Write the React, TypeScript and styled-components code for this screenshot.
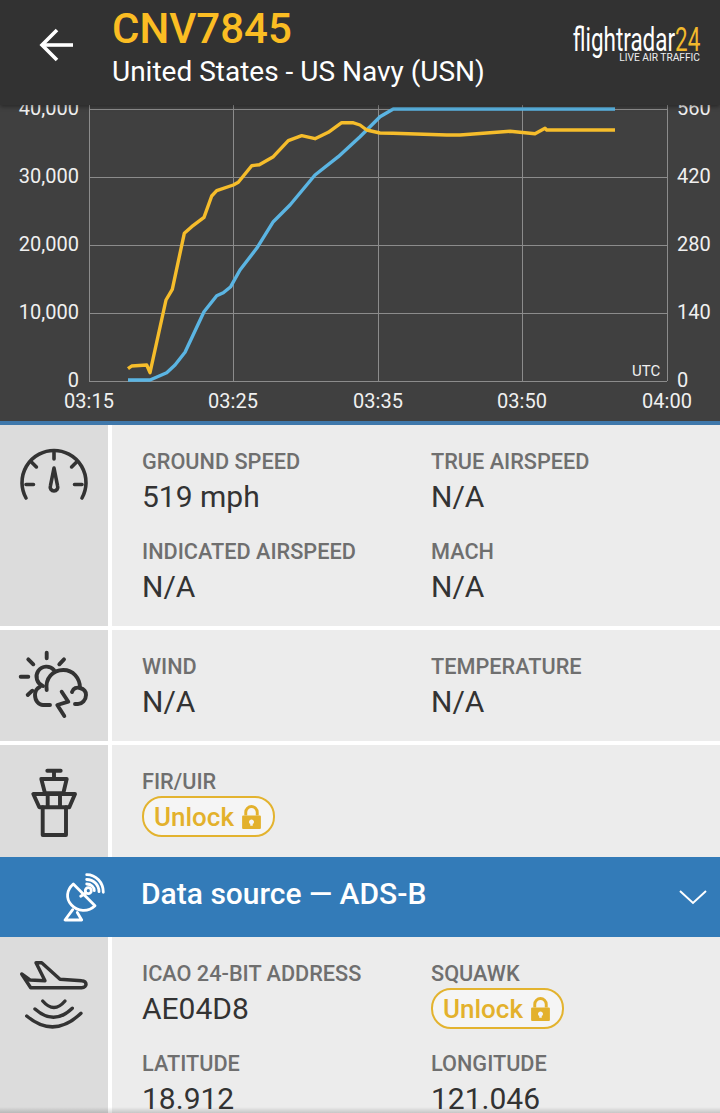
import styled, { createGlobalStyle } from 'styled-components';
import type { ReactNode } from 'react';

const GlobalStyle = createGlobalStyle`
  html, body {
    margin: 0;
    padding: 0;
    background: #fff;
  }
  body {
    font-family: Roboto, 'Liberation Sans', sans-serif;
  }
`;

const ScPage = styled.div`
  width: 720px;
  height: 1113px;
  overflow: hidden;
  position: relative;
  background: #fff;
`;

const ScHeader = styled.header`
  position: relative;
  z-index: 2;
  height: 105px;
  display: flex;
  align-items: flex-start;
  background: #323232;
  box-shadow: 0 2px 4px rgba(0, 0, 0, 0.35);
`;

const ScBack = styled.div`
  width: 112px;
  height: 100%;
  flex: none;
  display: flex;
  align-items: center;
  padding: 0 0 15px 39px;
  box-sizing: border-box;
`;

const ScTitles = styled.div`
  flex: 1;
  padding-top: 7px;
`;

const ScCallsign = styled.div`
  font-size: 42px;
  line-height: 44px;
  font-weight: 500;
  color: #fbbd23;
`;

const ScOperator = styled.div`
  margin-top: 2px;
  font-size: 28px;
  line-height: 38px;
  color: #fff;
`;

const ScLogo = styled.div`
  flex: none;
  width: 160px;
  padding: 26px 20px 0 0;
  box-sizing: border-box;
  display: flex;
  flex-direction: column;
  align-items: flex-end;
`;

const ScLogoName = styled.div`
  font-size: 34px;
  line-height: 26px;
  font-weight: 400;
  color: #fff;
  white-space: nowrap;
  transform: scaleX(0.66);
  transform-origin: right center;

  span {
    color: #f2b92c;
  }
`;

const ScLogoTag = styled.div`
  margin-top: 0;
  font-size: 10.2px;
  line-height: 12px;
  color: #eee;
  white-space: nowrap;
`;

const ScChart = styled.section`
  height: 316px;
  background: #404040;
  border-bottom: 4px solid #3f78ab;

  svg {
    display: block;
  }

  text {
    font-family: Roboto, 'Liberation Sans', sans-serif;
    font-size: 20px;
    fill: #f0f0f0;
  }
`;

const ScRow = styled.section<{ $height?: number; $flush?: boolean }>`
  display: grid;
  grid-template-columns: 108px 1fr;
  column-gap: 4px;
  margin-bottom: ${(p) => (p.$flush ? 0 : 4)}px;
  ${(p) => (p.$height ? `height: ${p.$height}px;` : '')}
`;

const ScIconCell = styled.div<{ $top: number; $stroke: number }>`
  background: #dcdcdc;
  padding-top: ${(p) => p.$top}px;

  svg {
    display: block;
    margin-left: 18px;
    fill: none;
    stroke: #333;
    stroke-width: ${(p) => p.$stroke};
    stroke-linecap: round;
    stroke-linejoin: round;
  }
`;

const ScContent = styled.div`
  background: #ececec;
  padding: 25px 0 22px 30px;
`;

const ScFields = styled.div`
  display: grid;
  grid-template-columns: 289px 1fr;
  grid-auto-rows: 64px;
  row-gap: 26px;
`;

const ScLabel = styled.div`
  font-size: 21.7px;
  line-height: 24px;
  font-weight: 500;
  color: #6f6f6f;
  white-space: nowrap;
`;

const ScValue = styled.div`
  margin-top: 6px;
  font-size: 30px;
  line-height: 34px;
  color: #333;
`;

const ScUnlock = styled.div`
  width: 133px;
  height: 41px;
  margin-top: 2px;
  padding-right: 2px;
  box-sizing: border-box;
  display: flex;
  align-items: center;
  justify-content: center;
  gap: 8px;
  border: 2px solid #e3b32f;
  border-radius: 20px;
  background: #f5f5f5;
  font-size: 26px;
  font-weight: 500;
  color: #e3b12c;
`;

const ScBanner = styled.section`
  height: 80px;
  display: flex;
  align-items: center;
  background: #337bb8;
  color: #fff;
  font-size: 30px;
  font-weight: 500;
`;

const ScDish = styled.div`
  width: 141px;
  flex: none;
  padding-left: 60px;
  box-sizing: border-box;

  svg {
    display: block;
    fill: none;
    stroke: #fff;
    stroke-width: 2.8;
    stroke-linecap: round;
    stroke-linejoin: round;
  }
`;

const ScBannerTitle = styled.div`
  flex: 1;
  padding-bottom: 7px;
`;

const ScChevron = styled.svg`
  margin-right: 13px;
  fill: none;
  stroke: #fff;
  stroke-width: 2;
`;

const ScBottomShade = styled.div`
  position: absolute;
  left: 0;
  right: 0;
  bottom: 0;
  height: 6px;
  background: linear-gradient(rgba(0, 0, 0, 0), rgba(0, 0, 0, 0.16));
`;

const YELLOW_LINE =
  '128,368.7 131.7,366 146.7,365 150,372.7 166,300 172.3,289.3 184.3,233.3 191.7,226.7 204,217.3 211.7,196 216.7,190.7 233.3,185 238.3,182.3 251.7,165.7 259.3,164.7 273.3,156.7 288.3,140.7 301.7,135.7 315,138.7 328.3,132.3 341.7,122.7 352.7,122.7 360,125 366.7,130 380,133 393,133.3 446.7,135 460,135 510,131.3 535,133.7 545,128.3 546.7,130 615,130';
const BLUE_LINE =
  '128,380 150,380 166.7,372.7 175,365 185,352.3 204,311.7 216.7,295.7 223.3,292.7 230.7,286.7 240,270 256.7,248.3 273.3,221.7 290,205 315,175 338.3,156.7 360,136.7 380,116.7 393.3,109 615,109';

const GRID_Y = [109, 177, 245, 313, 381];
const GRID_X = [89, 233, 378, 522, 667];
const LEFT_LABELS = ['40,000', '30,000', '20,000', '10,000', '0'];
const RIGHT_LABELS = ['560', '420', '280', '140', '0'];
const TIME_LABELS = ['03:15', '03:25', '03:35', '03:50', '04:00'];

function AltitudeChart() {
  return (
    <svg width="720" height="316" viewBox="0 105 720 316">
      {GRID_Y.map((y) => (
        <line key={y} x1="89" x2="667" y1={y + 0.5} y2={y + 0.5} stroke="#8c8c8c" strokeWidth="1" />
      ))}
      {GRID_X.map((x) => (
        <line key={x} x1={x + 0.5} x2={x + 0.5} y1="105" y2="381" stroke="#8c8c8c" strokeWidth="1" />
      ))}
      {LEFT_LABELS.map((t, i) => (
        <text key={t} x="79" y={GRID_Y[i] + 6} textAnchor="end">
          {t}
        </text>
      ))}
      {RIGHT_LABELS.map((t, i) => (
        <text key={t} x="677" y={GRID_Y[i] + 6}>
          {t}
        </text>
      ))}
      {TIME_LABELS.map((t, i) => (
        <text key={t} x={GRID_X[i]} y="408" textAnchor="middle">
          {t}
        </text>
      ))}
      <text x="632" y="376" style={{ fontSize: 15 }}>
        UTC
      </text>
      <polyline points={BLUE_LINE} fill="none" stroke="#5bb5e3" strokeWidth="3.4" strokeLinejoin="round" />
      <polyline points={YELLOW_LINE} fill="none" stroke="#f6bd2b" strokeWidth="3.4" strokeLinejoin="round" />
    </svg>
  );
}

function BackArrow() {
  return (
    <svg width="36" height="36" viewBox="0 0 36 36" fill="none" stroke="#fff" strokeWidth="3.6">
      <path d="M34 18H3" />
      <path d="M18 3 3 18l15 15" />
    </svg>
  );
}

function GaugeIcon() {
  return (
    <svg width="72" height="60" viewBox="0 0 72 60">
      <path d="M8 53A32 32 0 1 1 64 53" />
      <path d="M36 7.5V14M8 39.5h7.5M64 39.5h-7.5M13.4 16.9l5 5M58.6 16.9l-5 5" />
      <path d="M36 23 32.4 41a3.8 3.8 0 0 0 3.6 5 3.8 3.8 0 0 0 3.6-5Z" />
    </svg>
  );
}

function WeatherIcon() {
  return (
    <svg width="72" height="80" viewBox="0 0 72 80">
      <path d="M28.7 7.7v5.6M10.3 14.3l5 5M46 14.3l-4.7 5M2.7 31.7h7.6M9.7 50l4.6-4.3" />
      <path d="M25 41A10 10 0 1 1 36 25" />
      <path d="M28.7 45C27 33 35 25 45.3 25 55 25 62 33 62 43" />
      <path d="M54 47c1-4 5-5 8-4 4 1 6 4 6 7 0 5-4 9-8 9h-3" />
      <path d="M22 41.7c-3 1.500-5 5-5 8.300 0 6 4 10 8 10h7" />
      <path d="M43.700 46.700 50.300 56.700 39.300 60 46.300 71" />
    </svg>
  );
}

function TowerIcon() {
  return (
    <svg width="72" height="80" viewBox="0 0 72 80">
      <path d="M29.300 10.700h13.400M36 10.700v7.600" />
      <path d="M23.300 19h25.400l-3.400 14.300H27Z" />
      <path d="M15.300 34H57l-5.700 13.300h-30ZM29.700 34v13.300M42 34v13.300" />
      <path d="M24.700 47.300V75H48V47.300" />
    </svg>
  );
}

function PlaneIcon() {
  return (
    <svg width="72" height="80" viewBox="0 0 72 80">
      <path d="M3.700 19 12.700 32.700H63.700C69.500 32.700 69.500 25.700 63.700 25.700L42 24.300 23.700 7.700H18L27 25.700 12 25Z" />
      <path d="M24.700 46Q36 59 47 46" />
      <path d="M17 54Q36 71 54.300 53.300" />
      <path d="M8.700 61Q36 84 63 58.300" />
    </svg>
  );
}

function DishIcon() {
  return (
    <svg width="50" height="56" viewBox="0 0 50 56">
      <path d="M13.300 15 35 36.700C28 43.500 17.500 42.500 11.500 36 5.500 29.500 6.500 21 13.300 15Z" />
      <circle cx="28.300" cy="21.700" r="3" />
      <path d="M20.700 27.300 26 24" />
      <path d="M26.700 5.700C36 5.700 43.300 13.500 43.300 23.300" />
      <path d="M26.700 10.500C33.500 10.500 39 16 39 22.700" />
      <path d="M26.700 15C31 15 34.300 18 34.300 21.700" />
      <path d="M12.700 40.700 5 51H21.700L17.300 43.500" />
    </svg>
  );
}

function LockIcon() {
  return (
    <svg width="19" height="24" viewBox="0 0 18 23">
      <path d="M3.500 10V7a5.500 5.500 0 0 1 11 0v3" fill="none" stroke="#e3b12c" strokeWidth="2.800" />
      <path
        fillRule="evenodd"
        fill="#e3b12c"
        d="M1 10h16a1 1 0 0 1 1 1v11a1 1 0 0 1-1 1H1a1 1 0 0 1-1-1V11a1 1 0 0 1 1-1Zm8 4a2.300 2.300 0 0 0-1.200 4.300V20h2.400v-1.700A2.300 2.300 0 0 0 9 14Z"
      />
    </svg>
  );
}

function Unlock() {
  return (
    <ScUnlock>
      Unlock
      <LockIcon />
    </ScUnlock>
  );
}

interface FieldProps {
  label: string;
  children: ReactNode;
}
function Field({ label, children }: FieldProps) {
  return (
    <div>
      <ScLabel>{label}</ScLabel>
      {children}
    </div>
  );
}

export default function App() {
  return (
    <ScPage>
      <GlobalStyle />
      <ScHeader>
        <ScBack>
          <BackArrow />
        </ScBack>
        <ScTitles>
          <ScCallsign>CNV7845</ScCallsign>
          <ScOperator>United States - US Navy (USN)</ScOperator>
        </ScTitles>
        <ScLogo>
          <ScLogoName>
            flightradar<span>24</span>
          </ScLogoName>
          <ScLogoTag>LIVE AIR TRAFFIC</ScLogoTag>
        </ScLogo>
      </ScHeader>

      <ScChart>
        <AltitudeChart />
      </ScChart>

      <ScRow>
        <ScIconCell $top={20} $stroke={3.6}>
          <GaugeIcon />
        </ScIconCell>
        <ScContent>
          <ScFields>
            <Field label="GROUND SPEED">
              <ScValue>519 mph</ScValue>
            </Field>
            <Field label="TRUE AIRSPEED">
              <ScValue>N/A</ScValue>
            </Field>
            <Field label="INDICATED AIRSPEED">
              <ScValue>N/A</ScValue>
            </Field>
            <Field label="MACH">
              <ScValue>N/A</ScValue>
            </Field>
          </ScFields>
        </ScContent>
      </ScRow>

      <ScRow>
        <ScIconCell $top={15} $stroke={3.9}>
          <WeatherIcon />
        </ScIconCell>
        <ScContent>
          <ScFields>
            <Field label="WIND">
              <ScValue>N/A</ScValue>
            </Field>
            <Field label="TEMPERATURE">
              <ScValue>N/A</ScValue>
            </Field>
          </ScFields>
        </ScContent>
      </ScRow>

      <ScRow $height={112} $flush>
        <ScIconCell $top={15} $stroke={3.9}>
          <TowerIcon />
        </ScIconCell>
        <ScContent>
          <ScFields>
            <Field label="FIR/UIR">
              <Unlock />
            </Field>
          </ScFields>
        </ScContent>
      </ScRow>

      <ScBanner>
        <ScDish>
          <DishIcon />
        </ScDish>
        <ScBannerTitle>Data source — ADS-B</ScBannerTitle>
        <ScChevron width="28" height="16" viewBox="0 0 28 16">
          <path d="M1 2 14 14 27 2" />
        </ScChevron>
      </ScBanner>

      <ScRow $height={176} $flush>
        <ScIconCell $top={18} $stroke={3.4}>
          <PlaneIcon />
        </ScIconCell>
        <ScContent>
          <ScFields>
            <Field label="ICAO 24-BIT ADDRESS">
              <ScValue>AE04D8</ScValue>
            </Field>
            <Field label="SQUAWK">
              <Unlock />
            </Field>
            <Field label="LATITUDE">
              <ScValue>18.912</ScValue>
            </Field>
            <Field label="LONGITUDE">
              <ScValue>121.046</ScValue>
            </Field>
          </ScFields>
        </ScContent>
      </ScRow>
      <ScBottomShade />
    </ScPage>
  );
}
